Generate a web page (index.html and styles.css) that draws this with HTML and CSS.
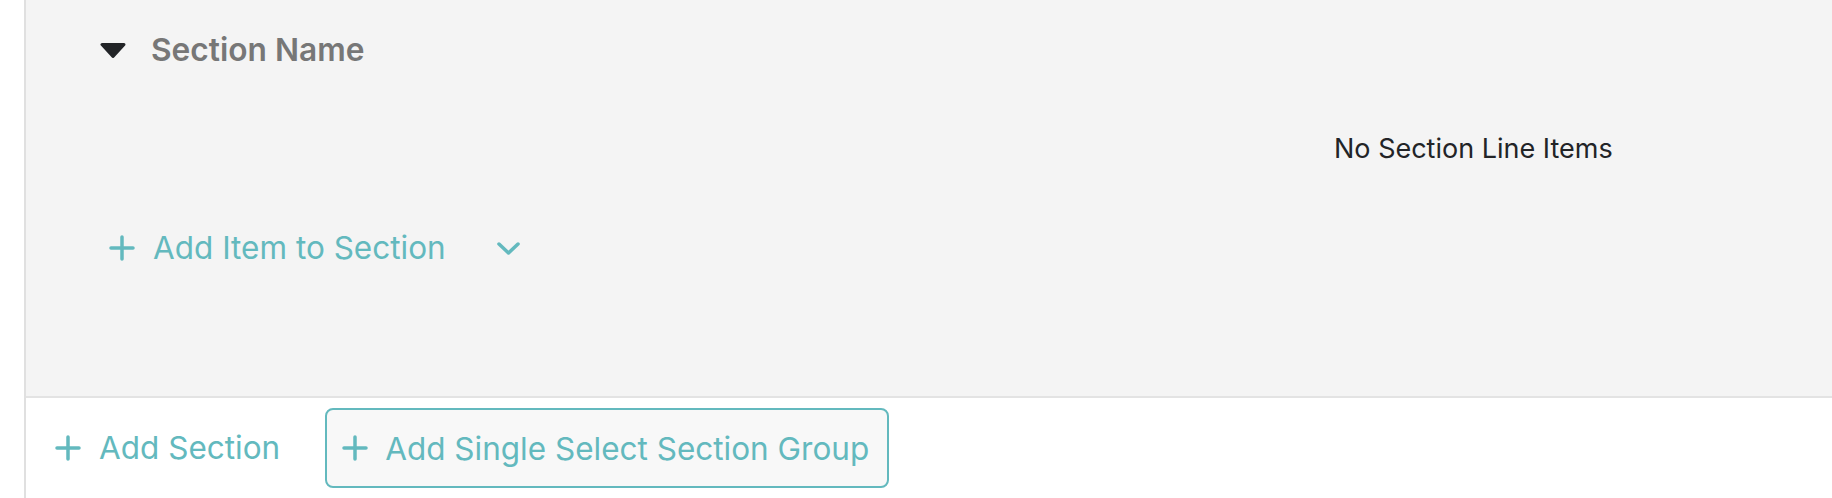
FILE: index.html
```html
<!DOCTYPE html>
<html lang="en">
<head>
    <meta charset="UTF-8">
    <meta name="viewport" content="width=device-width, initial-scale=1.0">
    <title>Section Builder</title>
    <link rel="stylesheet" href="styles.css">
</head>
<body>
    <div id="builder">
        <div class="section">
            <div class="section-head">
                <svg class="caret" width="26" height="15" viewBox="0 0 26 15">
                    <polygon points="2,1.5 24,1.5 13,13.5" fill="#222427" stroke="#222427" stroke-width="3" stroke-linejoin="round"/>
                </svg>
                <span class="section-name">Section Name</span>
            </div>
            <p class="empty">No Section Line Items</p>
            <div class="add-item">
                <span class="link">
                    <svg class="plus" width="26" height="26" viewBox="0 0 26 26">
                        <path d="M13 2v22M2 13h22" stroke="#63b9be" stroke-width="3.5" stroke-linecap="round" fill="none"/>
                    </svg>
                    Add Item to Section
                </span>
                <svg class="chevron" width="23" height="13" viewBox="0 0 23 13">
                    <path d="M2 2l9.5 9 9.5-9" stroke="#63b9be" stroke-width="3.5" stroke-linecap="round" stroke-linejoin="round" fill="none"/>
                </svg>
            </div>
        </div>
        <div class="actions">
            <span class="link">
                <svg class="plus" width="26" height="26" viewBox="0 0 26 26">
                    <path d="M13 2v22M2 13h22" stroke="#63b9be" stroke-width="3.5" stroke-linecap="round" fill="none"/>
                </svg>
                Add Section
            </span>
            <button class="group-btn">
                <svg class="plus" width="26" height="26" viewBox="0 0 26 26">
                    <path d="M13 2v22M2 13h22" stroke="#63b9be" stroke-width="3.5" stroke-linecap="round" fill="none"/>
                </svg>
                Add Single Select Section Group
            </button>
        </div>
    </div>
</body>
</html>
```

FILE: styles.css
```css
body {
    font-family: Inter, "Noto Sans", sans-serif;
    margin: 0;
    padding: 0;
    background-color: #fff;
    overflow: hidden;
}
#builder {
    margin-left: 24px;
    border-left: 2px solid #e0e0e0;
    height: 498px;
}
.section {
    display: flex;
    flex-direction: column;
    height: 396px;
    background-color: #f4f4f4;
    border-bottom: 2px solid #e3e3e3;
}
.section-head {
    display: flex;
    align-items: center;
    height: 100px;
    padding-left: 74px;
}
.section-name {
    margin-left: 25px;
    font-size: 31.7px;
    font-weight: 600;
    color: #777;
    line-height: 40px;
}
.empty {
    margin: 33px 0 0 1308px;
    font-size: 27px;
    line-height: 32px;
    color: #222427;
}
.add-item {
    display: flex;
    align-items: center;
    height: 50px;
    margin-top: 58px;
    padding-left: 83px;
}
.link {
    display: flex;
    align-items: center;
    gap: 18px;
    font-size: 31.5px;
    line-height: 40px;
    color: #63b9be;
    cursor: pointer;
}
.chevron {
    margin-left: 51px;
}
.actions {
    display: flex;
    align-items: center;
    height: 100px;
    padding-left: 29px;
}
.group-btn {
    display: flex;
    align-items: center;
    gap: 17px;
    height: 80px;
    margin-left: 45px;
    padding: 0 18px 0 15px;
    font-family: inherit;
    font-size: 31.5px;
    color: #63b9be;
    background-color: #f8f8f8;
    border: 2px solid #63b9be;
    border-radius: 8px;
    cursor: pointer;
}
```
